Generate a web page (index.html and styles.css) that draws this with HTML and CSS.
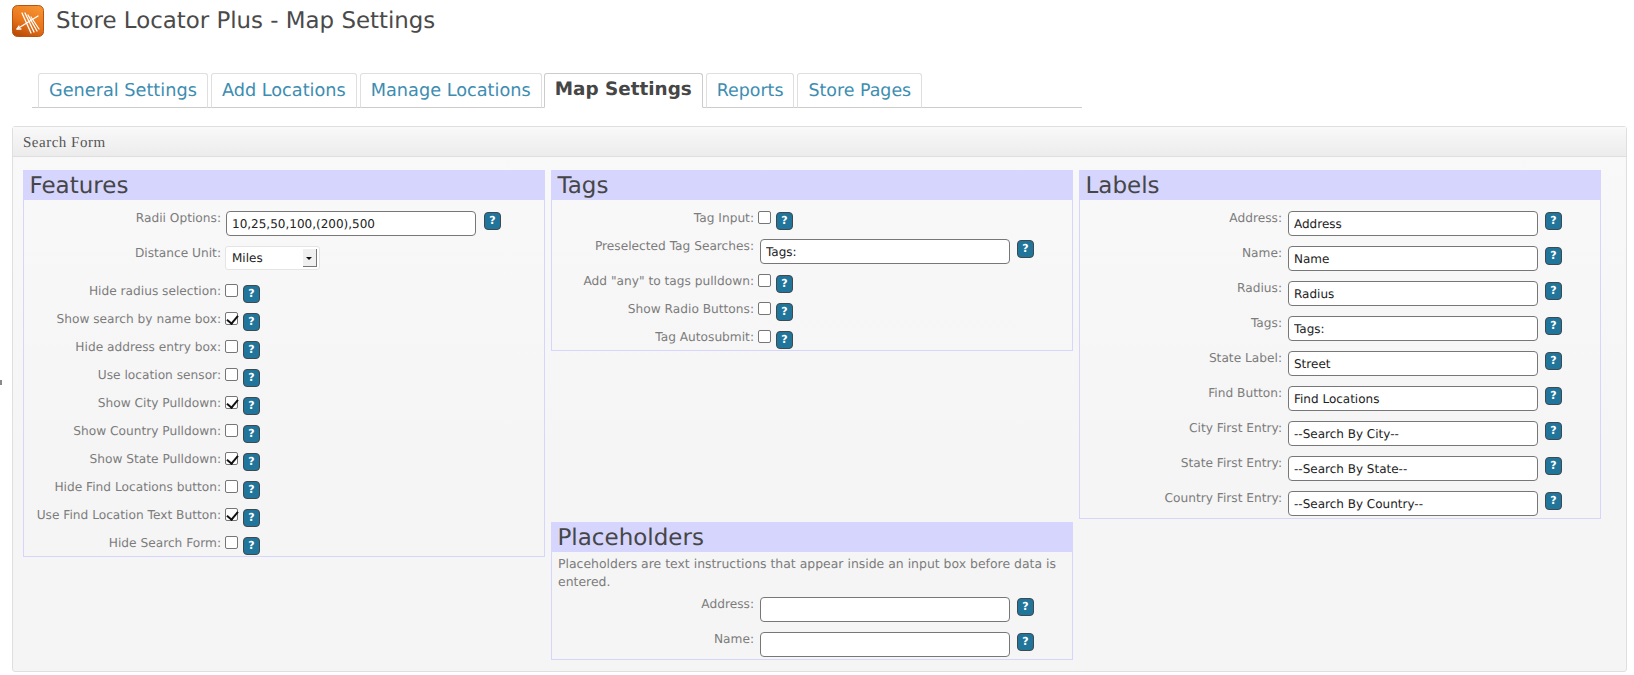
FILE: index.html
```html
<!DOCTYPE html>
<html lang="en">
<head>
<meta charset="utf-8">
<title>Store Locator Plus - Map Settings</title>
<link rel="stylesheet" href="styles.css">
</head>
<body>
<span class="edge-mark"></span>
<header class="title-bar">
  <svg class="logo" viewBox="0 0 32 32" width="32" height="32" aria-hidden="true">
    <defs><linearGradient id="lg" x1="0.7" y1="0" x2="0.3" y2="1"><stop offset="0" stop-color="#f59332"/><stop offset="0.55" stop-color="#e9751c"/><stop offset="1" stop-color="#bb4d08"/></linearGradient></defs>
    <rect x="0.5" y="0.5" width="31" height="31" rx="5" fill="url(#lg)" stroke="#b9540f"/>
    <g stroke="#fff" fill="none" stroke-linecap="round">
      <path d="M10 8 L19 28" stroke-width="1.3"/>
      <path d="M13 8 L22 27" stroke-width="1.3"/>
      <path d="M16 10 L25 26" stroke-width="1.3"/>
      <path d="M19 12 L27 24" stroke-width="1.2"/>
      <path d="M5 24 L26 11" stroke-width="1.3"/>
      <path d="M5 24 L9 24 M5 24 L7 21" stroke-width="1.3"/>
    </g>
  </svg>
  <h1 class="page-title">Store Locator Plus - Map Settings</h1>
</header>

<nav class="tabs">
  <a class="tab">General Settings</a>
  <a class="tab">Add Locations</a>
  <a class="tab">Manage Locations</a>
  <a class="tab active">Map Settings</a>
  <a class="tab">Reports</a>
  <a class="tab">Store Pages</a>
</nav>

<main class="panel">
  <h2 class="panel-head">Search Form</h2>
  <div class="grid">

    <section class="box features">
      <h3 class="box-head">Features</h3>
      <div class="box-body">
        <div class="row r-input"><label>Radii Options:</label><input class="text" type="text" value="10,25,50,100,(200),500"><span class="help">?</span></div>
        <div class="row r-select"><label>Distance Unit:</label><div class="select"><span class="sel-val">Miles</span><span class="sel-arrow"></span></div></div>
        <div class="row r-check"><label>Hide radius selection:</label><input class="chk" type="checkbox"><span class="help">?</span></div>
        <div class="row r-check"><label>Show search by name box:</label><input class="chk" type="checkbox" checked><span class="help">?</span></div>
        <div class="row r-check"><label>Hide address entry box:</label><input class="chk" type="checkbox"><span class="help">?</span></div>
        <div class="row r-check"><label>Use location sensor:</label><input class="chk" type="checkbox"><span class="help">?</span></div>
        <div class="row r-check"><label>Show City Pulldown:</label><input class="chk" type="checkbox" checked><span class="help">?</span></div>
        <div class="row r-check"><label>Show Country Pulldown:</label><input class="chk" type="checkbox"><span class="help">?</span></div>
        <div class="row r-check"><label>Show State Pulldown:</label><input class="chk" type="checkbox" checked><span class="help">?</span></div>
        <div class="row r-check"><label>Hide Find Locations button:</label><input class="chk" type="checkbox"><span class="help">?</span></div>
        <div class="row r-check"><label>Use Find Location Text Button:</label><input class="chk" type="checkbox" checked><span class="help">?</span></div>
        <div class="row r-check"><label>Hide Search Form:</label><input class="chk" type="checkbox"><span class="help">?</span></div>
      </div>
    </section>

    <section class="box tags">
      <h3 class="box-head">Tags</h3>
      <div class="box-body">
        <div class="row r-check"><label>Tag Input:</label><input class="chk" type="checkbox"><span class="help">?</span></div>
        <div class="row r-input"><label>Preselected Tag Searches:</label><input class="text" type="text" value="Tags:"><span class="help">?</span></div>
        <div class="row r-check"><label>Add "any" to tags pulldown:</label><input class="chk" type="checkbox"><span class="help">?</span></div>
        <div class="row r-check"><label>Show Radio Buttons:</label><input class="chk" type="checkbox"><span class="help">?</span></div>
        <div class="row r-check"><label>Tag Autosubmit:</label><input class="chk" type="checkbox"><span class="help">?</span></div>
      </div>
    </section>

    <section class="box labels">
      <h3 class="box-head">Labels</h3>
      <div class="box-body">
        <div class="row r-input"><label>Address:</label><input class="text" type="text" value="Address"><span class="help">?</span></div>
        <div class="row r-input"><label>Name:</label><input class="text" type="text" value="Name"><span class="help">?</span></div>
        <div class="row r-input"><label>Radius:</label><input class="text" type="text" value="Radius"><span class="help">?</span></div>
        <div class="row r-input"><label>Tags:</label><input class="text" type="text" value="Tags:"><span class="help">?</span></div>
        <div class="row r-input"><label>State Label:</label><input class="text" type="text" value="Street"><span class="help">?</span></div>
        <div class="row r-input"><label>Find Button:</label><input class="text" type="text" value="Find Locations"><span class="help">?</span></div>
        <div class="row r-input"><label>City First Entry:</label><input class="text" type="text" value="--Search By City--"><span class="help">?</span></div>
        <div class="row r-input"><label>State First Entry:</label><input class="text" type="text" value="--Search By State--"><span class="help">?</span></div>
        <div class="row r-input"><label>Country First Entry:</label><input class="text" type="text" value="--Search By Country--"><span class="help">?</span></div>
      </div>
    </section>

    <section class="box placeholders">
      <h3 class="box-head">Placeholders</h3>
      <div class="box-body">
        <p class="note">Placeholders are text instructions that appear inside an input box before data is entered.</p>
        <div class="row r-input"><label>Address:</label><input class="text" type="text"><span class="help">?</span></div>
        <div class="row r-input"><label>Name:</label><input class="text" type="text"><span class="help">?</span></div>
      </div>
    </section>

  </div>
</main>
</body>
</html>
```

FILE: styles.css
```css
* { box-sizing: border-box; }
html, body { margin: 0; padding: 0; background: #fff; }
body {
  position: relative;
  font-family: "DejaVu Sans", sans-serif;
  font-size: 12.2px;
  color: #7c7c7c;
  width: 1634px;
  height: 675px;
  overflow: hidden;
  text-rendering: geometricPrecision;
}
.edge-mark {
  position: absolute;
  left: 0;
  top: 380px;
  width: 2px;
  height: 5px;
  background: #8a8a8a;
}
.title-bar {
  display: flex;
  align-items: center;
  gap: 12px;
  padding: 4px 0 0 12px;
  height: 37px;
}
.logo { flex: none; }
.page-title {
  margin: 0;
  font-size: 22.9px;
  font-weight: 400;
  color: #4a4a4a;
  line-height: 38px;
}
.tabs {
  display: flex;
  gap: 3px;
  width: 1050px;
  height: 35px;
  margin: 36px 0 0 32px;
  padding-left: 6px;
  border-bottom: 1px solid #ccc;
}
.tab {
  display: block;
  height: 35px;
  padding: 0 10px;
  font-size: 17.7px;
  line-height: 34px;
  color: #3d8db1;
  background: #fff;
  border: 1px solid #dfdfdf;
  border-bottom-color: #ccc;
  border-radius: 3px 3px 0 0;
}
.tab.active {
  margin-left: -1px;
  color: #464646;
  font-size: 18.4px;
  font-weight: 700;
  border-color: #ccc;
  border-bottom-color: #fff;
  line-height: 31px;
}
.tab.active ~ .tab { font-size: 17.4px; }
.panel {
  margin: 18px 7px 0 12px;
  height: 546px;
  background: linear-gradient(#f9f9f9 0, #f5f5f5 60%);
  border: 1px solid #dfdfdf;
  border-radius: 3px;
}
.panel-head {
  margin: 0;
  height: 30px;
  padding: 2px 10px 0;
  font-family: "Liberation Serif", serif;
  font-size: 15px;
  font-weight: 400;
  letter-spacing: .5px;
  line-height: 29px;
  color: #555;
  background: linear-gradient(#f9f9f9, #ececec);
  border-bottom: 1px solid #dfdfdf;
}
.grid {
  display: grid;
  grid-template-columns: repeat(3, 522px);
  grid-template-rows: auto auto;
  column-gap: 6px;
  row-gap: 3px;
  padding: 13px 0 0 10px;
}
.box {
  align-self: start;
  border: 1px solid #d5d5fd;
}
.features { grid-column: 1; grid-row: 1 / span 2; }
.tags { grid-column: 2; grid-row: 1; }
.labels { grid-column: 3; grid-row: 1; }
.placeholders { grid-column: 2; grid-row: 2; }
.box-head {
  margin: 0;
  height: 29px;
  padding-left: 5.5px;
  font-size: 23px;
  font-weight: 400;
  line-height: 30px;
  color: #464646;
  background: #d5d5fd;
}
.box-body { padding: 11px 0 0; }
.row {
  display: flex;
  align-items: flex-start;
}
.row label {
  flex: none;
  width: 197px;
  text-align: right;
  line-height: 14px;
  white-space: nowrap;
}
.tags .row label,
.labels .row label,
.placeholders .row label { width: 202px; }
.r-input { height: 35px; }
.r-select { height: 38px; }
.r-check { height: 28px; }
.r-input:last-child { height: 27px; }
.r-check:last-child { height: 20px; }
.text {
  flex: none;
  width: 250px;
  height: 25px;
  margin: 0 7px 0 6px;
  padding: 1px 5px 0;
  font: 12px "DejaVu Sans", sans-serif;
  text-rendering: geometricPrecision;
  color: #222;
  background: #fff;
  border: 1px solid #777;
  border-radius: 4px;
  outline: 0;
}
.features .text { margin-left: 5px; }
.features .text + .help { margin-left: 1px; }
.chk {
  appearance: none;
  position: relative;
  flex: none;
  width: 13px;
  height: 13px;
  margin: 0 5px 0 4px;
  background: #fff;
  border: 1px solid #767676;
  border-radius: 2px;
}
.chk:checked::after {
  content: "";
  position: absolute;
  left: 3px;
  top: 0;
  width: 5px;
  height: 9px;
  border: solid #111;
  border-width: 0 2px 2px 0;
  transform: rotate(40deg);
}
.help {
  flex: none;
  width: 17px;
  height: 18px;
  margin-top: 1px;
  font: 700 11px/16px "DejaVu Sans", sans-serif;
  text-align: center;
  color: #fff;
  background: #21759b;
  border: 1px solid #3f4a50;
  border-radius: 4px;
}
.select {
  position: relative;
  width: 95px;
  height: 24px;
  margin: 0 0 0 4px;
  padding-left: 6px;
  background: #fff;
  border: 1px solid #e4e4e4;
  border-radius: 3px;
  font-size: 12px;
  line-height: 22px;
  color: #222;
}
.sel-arrow {
  position: absolute;
  right: 2px;
  top: 2px;
  width: 14px;
  height: 18px;
  background: #f0f0f0;
  border-right: 1px solid #777;
  border-bottom: 1px solid #777;
}
.sel-arrow::after {
  content: "";
  position: absolute;
  left: 3px;
  top: 8px;
  border: 3px solid transparent;
  border-top-color: #111;
}
.note {
  margin: 0 0 6px;
  padding: 0 6px;
  font-size: 12.45px;
  line-height: 18px;
}
.placeholders .box-body { padding-top: 3px; }
```
